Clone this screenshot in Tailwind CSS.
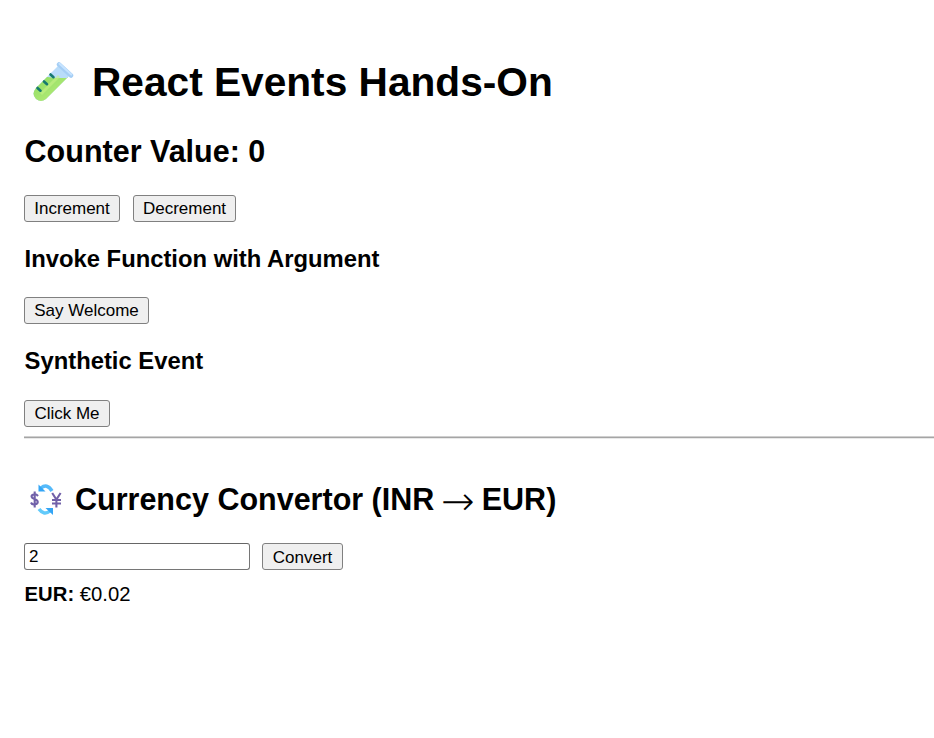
<!DOCTYPE html>
<html lang="en"><head><meta charset="utf-8"><title>React Events</title>
<script src="https://cdn.jsdelivr.net/npm/@tailwindcss/browser@4"></script></head>
<body class="bg-white text-black overflow-hidden">
<main class="pl-6 pt-[58px] font-['Liberation_Sans',Arial,sans-serif] text-[20.3px]">
<h1 class="flex items-center h-12 text-[40.65px] leading-[48px] font-bold whitespace-nowrap">
<svg class="w-[42px] h-[42px] ml-2 mr-[18px] shrink-0" viewBox="0 0 42 42">
<defs><linearGradient id="g" x1="0" y1="0" x2="1" y2="1"><stop stop-color="#8edb62"/><stop offset="1" stop-color="#bdef7c"/></linearGradient></defs>
<path d="M26 5 37 15 14 38Q9 42 4 38Q-1 33 4 27Z" fill="#b9dcfa"/>
<path d="M15 16H36L14 38Q9 42 4 38Q-1 33 4 27Z" fill="url(#g)"/>
<path d="M19.500 11.500 15.500 16 24 17H35L37 14Z" fill="#b9dcfa"/>
<path d="M9 33 27 15" stroke="#c7f287" stroke-width="3" opacity=".6"/>
<path d="M27 3.500 39 14.500" stroke="#a5cef5" stroke-width="4.500" stroke-linecap="round"/>
<path d="M27.500 2.700 39.300 13.500" stroke="#c6e3ff" stroke-width="2" stroke-linecap="round"/>
<path d="m18.500 13.500 3 2.700M12 20.500l3 2.700M5.500 27l3 2.700" stroke="#16796f" stroke-width="2.600" stroke-linecap="round"/>
</svg>React Events Hands-On</h1>
<h2 class="mt-[27px] pl-[.6px] h-9 text-[30.5px] leading-9 font-bold">Counter Value: 0</h2>
<div class="mt-[26px] flex gap-[13px]">
<button class="w-24 h-[27px] border border-[#808080] rounded-[3px] bg-[#efefef] text-[17px] leading-[25px]">Increment</button>
<button class="w-[103px] h-[27px] border border-[#808080] rounded-[3px] bg-[#efefef] text-[17px] leading-[25px]">Decrement</button></div>
<h3 class="mt-[23px] pl-[.6px] h-7 text-[23.8px] leading-7 font-bold">Invoke Function with Argument</h3>
<button class="block mt-6 w-[125px] h-[27px] border border-[#808080] rounded-[3px] bg-[#efefef] text-[17px] leading-[25px]">Say Welcome</button>
<h3 class="mt-[23px] pl-[.6px] h-7 text-[23.8px] leading-7 font-bold">Synthetic Event</h3>
<button class="block mt-[25px] w-[86px] h-[27px] border border-[#808080] rounded-[3px] bg-[#efefef] text-[17px] leading-[25px]">Click Me</button>
<hr class="mt-[9px] h-[3px] border-0 border-t border-b border-t-[#cfcfcf] border-b-[#e9e9e9] bg-[#a5a5a5]">
<h2 class="mt-[42px] h-9 flex items-center text-[30.5px] leading-9 font-bold whitespace-pre">
<svg class="w-8 h-8 ml-[6px] mr-[13px] shrink-0" viewBox="0 0 32 32" fill="none">
<path d="M22 8Q17 0 11 5" stroke="#55bafa" stroke-width="3.500"/><path d="M8.500 1.500v7h7Z" fill="#34a5f5"/>
<path d="M9 26Q14 33 20 28" stroke="#62cafa" stroke-width="3.500"/><path d="M15.500 25h7.500v7Z" fill="#34a5f5"/>
<path d="M8 13Q6 10.500 3.700 11.500C.5 12.500 1 15 4.500 16C9 17.500 8.500 20.500 5 21.300Q2 22 1 19.500M4.700 8.500v16" stroke="#7161a9" stroke-width="2.100"/>
<path d="m22.200 10 4.200 6.500 4.200-6.500M26.400 16v8.500M22 17h9M22 20.500h9" stroke="#7161a9" stroke-width="2.100"/>
</svg><span class="flex items-center">Currency Convertor (INR <span class="font-['DejaVu_Sans'] font-extralight text-[40px] leading-9 -mx-[1.5px] mt-[3px]">→</span> EUR)</span></h2>
<div class="mt-[26px] flex gap-3">
<input type="text" value="2" class="w-[226px] h-[27px] border border-[#767676] border-t-[#666] rounded-[3px] px-1 pt-px text-[17px] leading-[25px] bg-white">
<button class="w-[81px] h-[27px] border border-[#808080] rounded-[3px] bg-[#efefef] text-[17px] leading-[25px] pt-px">Convert</button></div>
<p class="mt-3 pl-[.6px] leading-6"><strong>EUR:</strong> €0.02</p>
</main></body></html>
